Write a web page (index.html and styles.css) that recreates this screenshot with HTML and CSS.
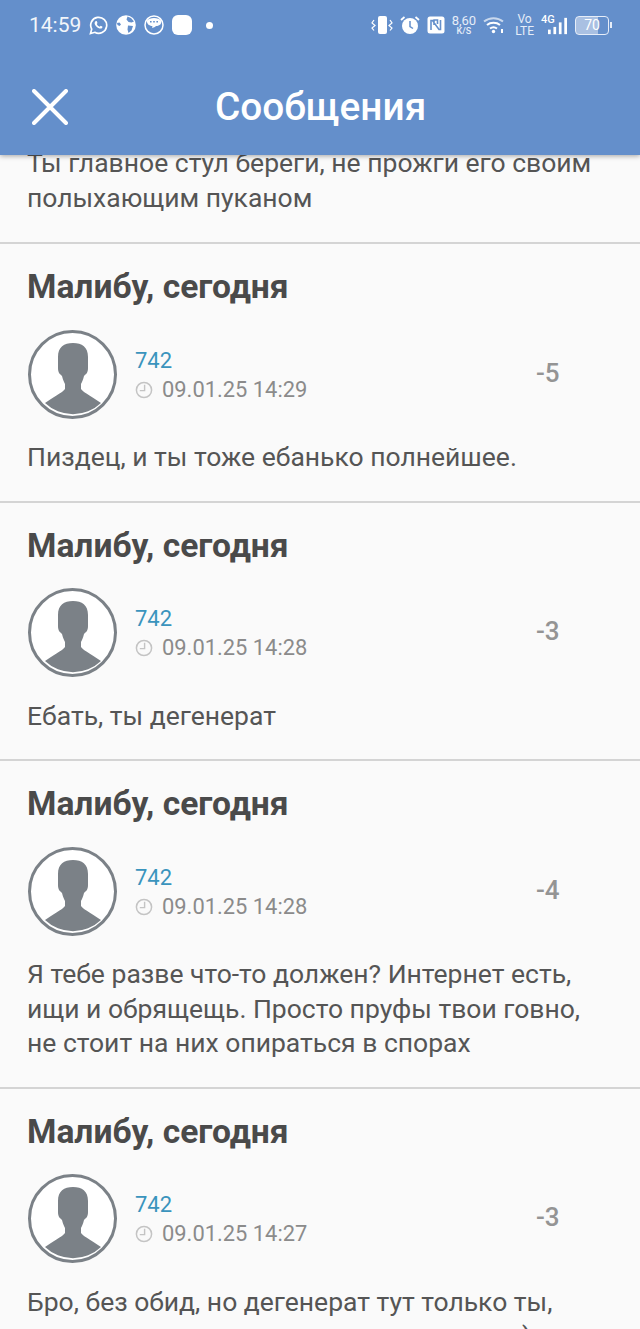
FILE: index.html
```html
<!DOCTYPE html>
<html lang="ru">
  <head>
    <meta charset="UTF-8" />
    <meta name="viewport" content="width=device-width, initial-scale=1.0" />
    <title>Сообщения</title>
    <link rel="stylesheet" href="styles.css">
  </head>
  <body>
    <svg class="defs" width="0" height="0" aria-hidden="true">
      <symbol id="avatar" viewBox="0 0 89 89">
        <circle cx="44.500" cy="44.500" r="43" fill="#fff" stroke="#7b8187" stroke-width="3" />
        <path fill="#7b8187" d="M45 13C36 13 30 17 30 27L30 38C30 43 32 44 34 46C35 50 36 52 37 54L37 59C35 62 30 64 17 73A40.500 40.500 0 0 0 73 73C60 64 55 62 53 59L53 54C54 52 55 50 56 46C58 44 60 43 60 38L60 27C60 17 54 13 45 13Z" />
      </symbol>
      <symbol id="clock" viewBox="0 0 18 18">
        <circle cx="9" cy="9" r="7.600" fill="none" stroke="#c4c4c4" stroke-width="1.500" />
        <path fill="none" stroke="#c4c4c4" stroke-width="1.400" d="M9.600 3.800v5.800H4.800" />
      </symbol>
    </svg>

    <header class="top">
      <div class="status">
        <div class="status-left">
          <span class="clock-text">14:59</span>
          <!-- whatsapp -->
          <svg class="st-icon" width="19" height="19" viewBox="0 0 19 19">
            <path fill="none" stroke="#fff" stroke-width="1.700" d="M1.500 17.500l1.200-4.300A8 8 0 1 1 5.800 16.300z" />
            <path fill="#fff" d="M6.600 5.300c.5-.4 1.100-.3 1.300.2l.6 1.400-.7 1c.6 1.300 1.500 2.200 2.900 2.800l1-.9 1.500.8c.4.3.3.9-.1 1.300-1 1-2.300.8-3.800 0C7.600 11.100 6.400 9.800 5.800 8.300c-.4-1.200 0-2.300.8-3z" />
          </svg>
          <!-- globe -->
          <svg class="st-icon" width="20" height="20" viewBox="0 0 20 20">
            <circle cx="10" cy="10" r="9.800" fill="#fff" />
            <path fill="#648fcb" d="M11.500 1.500l3.500 1.500 3 3.500-2.500 1-3-.5-2-2.500zM12 10.500l5 .5-1.500 4.500-3 2.500-1-3.500zM1 8l2.500-.5 1.500 2-1.500 1.500-2-1z" />
          </svg>
          <!-- chat bubble -->
          <svg class="st-icon" width="20" height="20" viewBox="0 0 20 20">
            <circle cx="10" cy="10" r="9" fill="none" stroke="#fff" stroke-width="1.500" />
            <path fill="#fff" d="M3 5.500C5 2 15 2 17 5.500c1 3-1 5.500-5 5.500-1.500 1.500-3 2-4 1.500l.5-1.500C5 11 2.500 8.500 3 5.500z" />
            <path fill="#648fcb" d="M6 6h1.600v1.600H6zM9.200 6h1.600v1.600H9.200zM12.400 6H14v1.600h-1.600z" />
          </svg>
          <span class="blank-icon"></span>
          <span class="dot"></span>
        </div>
        <div class="status-right">
          <!-- vibrate -->
          <svg class="st-icon" width="22" height="18" viewBox="0 0 22 18">
            <rect x="7" y="0" width="9" height="18" rx="2" fill="#fff" />
            <path fill="none" stroke="#fff" stroke-width="1.200" d="M3 4L1 7l3 2.500-3 2.500 2 2.500M19 4l2 3-3 2.500 3 2.500-2 2.500" />
          </svg>
          <!-- alarm -->
          <svg class="st-icon" width="20" height="20" viewBox="0 0 20 20">
            <circle cx="10" cy="11" r="8" fill="#fff" />
            <path fill="none" stroke="#648fcb" stroke-width="1.500" d="M10 6v5.500l3 2" />
            <path fill="none" stroke="#fff" stroke-width="1.800" d="M1 5l3.500-3M19 5l-3.500-3" />
          </svg>
          <!-- nfc -->
          <svg class="st-icon" width="18" height="18" viewBox="0 0 18 18">
            <rect x="0.500" y="0.500" width="17" height="17" rx="2.500" fill="#fff" />
            <path fill="none" stroke="#648fcb" stroke-width="1.600" d="M4 14V4.500h1.500L12 13.500h1.500V4M7 9V4h3.500v4" />
          </svg>
          <span class="speed"><span class="speed-num">8,60</span><span class="speed-unit">K/S</span></span>
          <!-- wifi -->
          <svg class="st-icon wifi" width="21" height="18" viewBox="0 0 21 18">
            <path fill="none" stroke="#fff" stroke-opacity=".65" stroke-width="2" d="M1 5.500c5.500-4.500 13.500-4.500 19 0" />
            <path fill="none" stroke="#fff" stroke-width="2" d="M4 9c3.500-3 9.500-3 13 0M7 12.500c2-1.500 5-1.500 7 0" />
            <circle cx="10.500" cy="15.500" r="1.700" fill="#fff" />
            <rect x="18" y="13" width="2" height="4" fill="#fff" />
          </svg>
          <span class="volte"><span>Vo</span><span>LTE</span></span>
          <div class="signal">
            <span class="net">4G</span>
            <svg width="21" height="18" viewBox="0 0 21 18" class="bars">
              <rect x="0" y="13" width="3" height="5" fill="#fff" />
              <rect x="6" y="10" width="3" height="8" fill="#fff" />
              <rect x="12" y="5" width="3" height="13" fill="#fff" />
              <rect x="18" y="0" width="3" height="18" fill="#fff" />
            </svg>
          </div>
          <div class="battery"><span class="battery-body">70</span><span class="battery-tip"></span></div>
        </div>
      </div>
      <div class="bar">
        <svg class="close" width="36" height="36" viewBox="0 0 36 36">
          <path fill="none" stroke="#fff" stroke-width="4" stroke-linecap="round" d="M2 2l32 32M34 2L2 34" />
        </svg>
        <h1 class="bar-title">Сообщения</h1>
      </div>
    </header>

    <main class="list">
      <div class="cut-off">
        <p class="msg">Ты главное стул береги, не прожги его своим полыхающим пуканом</p>
      </div>

      <section class="post">
        <h2 class="post-title">Малибу, сегодня</h2>
        <div class="meta">
          <svg class="avatar"><use href="#avatar" /></svg>
          <div class="who">
            <a class="nick">742</a>
            <div class="when"><svg class="when-icon"><use href="#clock" /></svg>09.01.25 14:29</div>
          </div>
          <div class="rate">-5</div>
        </div>
        <p class="msg">Пиздец, и ты тоже ебанько полнейшее.</p>
      </section>

      <section class="post">
        <h2 class="post-title">Малибу, сегодня</h2>
        <div class="meta">
          <svg class="avatar"><use href="#avatar" /></svg>
          <div class="who">
            <a class="nick">742</a>
            <div class="when"><svg class="when-icon"><use href="#clock" /></svg>09.01.25 14:28</div>
          </div>
          <div class="rate">-3</div>
        </div>
        <p class="msg">Ебать, ты дегенерат</p>
      </section>

      <section class="post">
        <h2 class="post-title">Малибу, сегодня</h2>
        <div class="meta">
          <svg class="avatar"><use href="#avatar" /></svg>
          <div class="who">
            <a class="nick">742</a>
            <div class="when"><svg class="when-icon"><use href="#clock" /></svg>09.01.25 14:28</div>
          </div>
          <div class="rate">-4</div>
        </div>
        <p class="msg">Я тебе разве что-то должен? Интернет есть, ищи и обрящещь. Просто пруфы твои говно, не стоит на них опираться в спорах</p>
      </section>

      <section class="post">
        <h2 class="post-title">Малибу, сегодня</h2>
        <div class="meta">
          <svg class="avatar"><use href="#avatar" /></svg>
          <div class="who">
            <a class="nick">742</a>
            <div class="when"><svg class="when-icon"><use href="#clock" /></svg>09.01.25 14:27</div>
          </div>
          <div class="rate">-3</div>
        </div>
        <p class="msg">Бро, без обид, но дегенерат тут только ты,<span class="msg-tail">)</span></p>
      </section>
    </main>
  </body>
</html>
```

FILE: styles.css
```css
* {
  margin: 0;
  padding: 0;
  box-sizing: border-box;
}

html,
body {
  height: 1329px;
  overflow: hidden;
}

body {
  font-family: Roboto, "Noto Sans", sans-serif;
  background-color: #fafafa;
  color: #505050;
}

.defs {
  position: absolute;
}

/* шапка */
.top {
  position: relative;
  z-index: 2;
  height: 155px;
  background-color: #648fcb;
  box-shadow: 0 1px 5px rgba(0, 0, 0, 0.35);
  color: #fff;
}

.status {
  display: flex;
  justify-content: space-between;
  align-items: center;
  height: 50px;
  padding: 0 28px 0 29px;
}

.status-left,
.status-right {
  display: flex;
  align-items: center;
}

.status-left {
  gap: 8px;
}

.status-right {
  gap: 7px;
}

.clock-text {
  font-size: 21px;
  line-height: 50px;
  opacity: 0.92;
}

.st-icon {
  display: block;
  flex: none;
}

.blank-icon {
  width: 20px;
  height: 20px;
  border-radius: 6px;
  background-color: #fff;
}

.dot {
  width: 7px;
  height: 7px;
  margin-left: 6px;
  border-radius: 50%;
  background-color: #fff;
}

.speed,
.volte {
  display: flex;
  flex-direction: column;
  align-items: center;
  line-height: 1;
  color: #e6edf8;
}

.speed-num {
  font-size: 13px;
}

.speed-unit {
  font-size: 9px;
  font-weight: 500;
}

.volte {
  margin-left: 4px;
  font-size: 12px;
}

.signal {
  position: relative;
  width: 26px;
  height: 22px;
}

.net {
  position: absolute;
  top: 0;
  left: 0;
  font-size: 11px;
  line-height: 12px;
  font-weight: 500;
}

.bars {
  position: absolute;
  right: 0;
  bottom: 1px;
  width: 19px;
  height: 18px;
}

.battery {
  display: flex;
  align-items: center;
  gap: 1px;
  margin-left: 1px;
}

.battery-body {
  width: 34px;
  height: 19px;
  border: 1.5px solid #e6edf8;
  border-radius: 4px;
  background: linear-gradient(90deg, #a9c0e2 70%, transparent 70%);
  font-size: 14px;
  line-height: 16px;
  text-align: center;
}

.battery-tip {
  width: 2px;
  height: 6px;
  background-color: #e6edf8;
}

.bar {
  display: flex;
  align-items: center;
  height: 105px;
  padding: 10px 0 2px 32px;
}

.close {
  display: block;
  flex: none;
}

.bar-title {
  margin-left: 147px;
  font-size: 38.800px;
  font-weight: 500;
  line-height: 44px;
}

/* список */
.cut-off {
  display: flex;
  flex-direction: column;
  justify-content: flex-end;
  height: 89px;
  overflow: hidden;
  padding: 0 27px 27px;
  border-bottom: 2px solid #d4d4d4;
}

.post {
  padding: 25px 27px 26px;
  border-bottom: 2px solid #d4d4d4;
}

.post-title {
  font-size: 33.600px;
  line-height: 36px;
  font-weight: 700;
  color: #4a4a4a;
}

.meta {
  display: flex;
  align-items: center;
  height: 90px;
  margin-top: 24px;
}

.avatar {
  flex: none;
  width: 89px;
  height: 89px;
  margin-left: 1px;
}

.who {
  flex: 1;
  margin-left: 18px;
  padding-top: 2px;
}

.nick {
  display: block;
  font-size: 22px;
  line-height: 28px;
  color: #3a94bd;
}

.when {
  display: flex;
  align-items: center;
  margin-top: 1px;
  font-size: 21.900px;
  line-height: 28px;
  color: #8b8b8b;
}

.when-icon {
  flex: none;
  width: 18px;
  height: 18px;
  margin-right: 9px;
}

.rate {
  width: 77px;
  margin-top: -3px;
  font-size: 26px;
  font-weight: 500;
  color: #949494;
}

.msg {
  margin-top: 21px;
  font-size: 26.500px;
  line-height: 34.500px;
  color: #555;
}

.msg-tail {
  display: block;
  padding-left: 495px;
}

.cut-off .msg {
  margin-top: 0;
}
```
